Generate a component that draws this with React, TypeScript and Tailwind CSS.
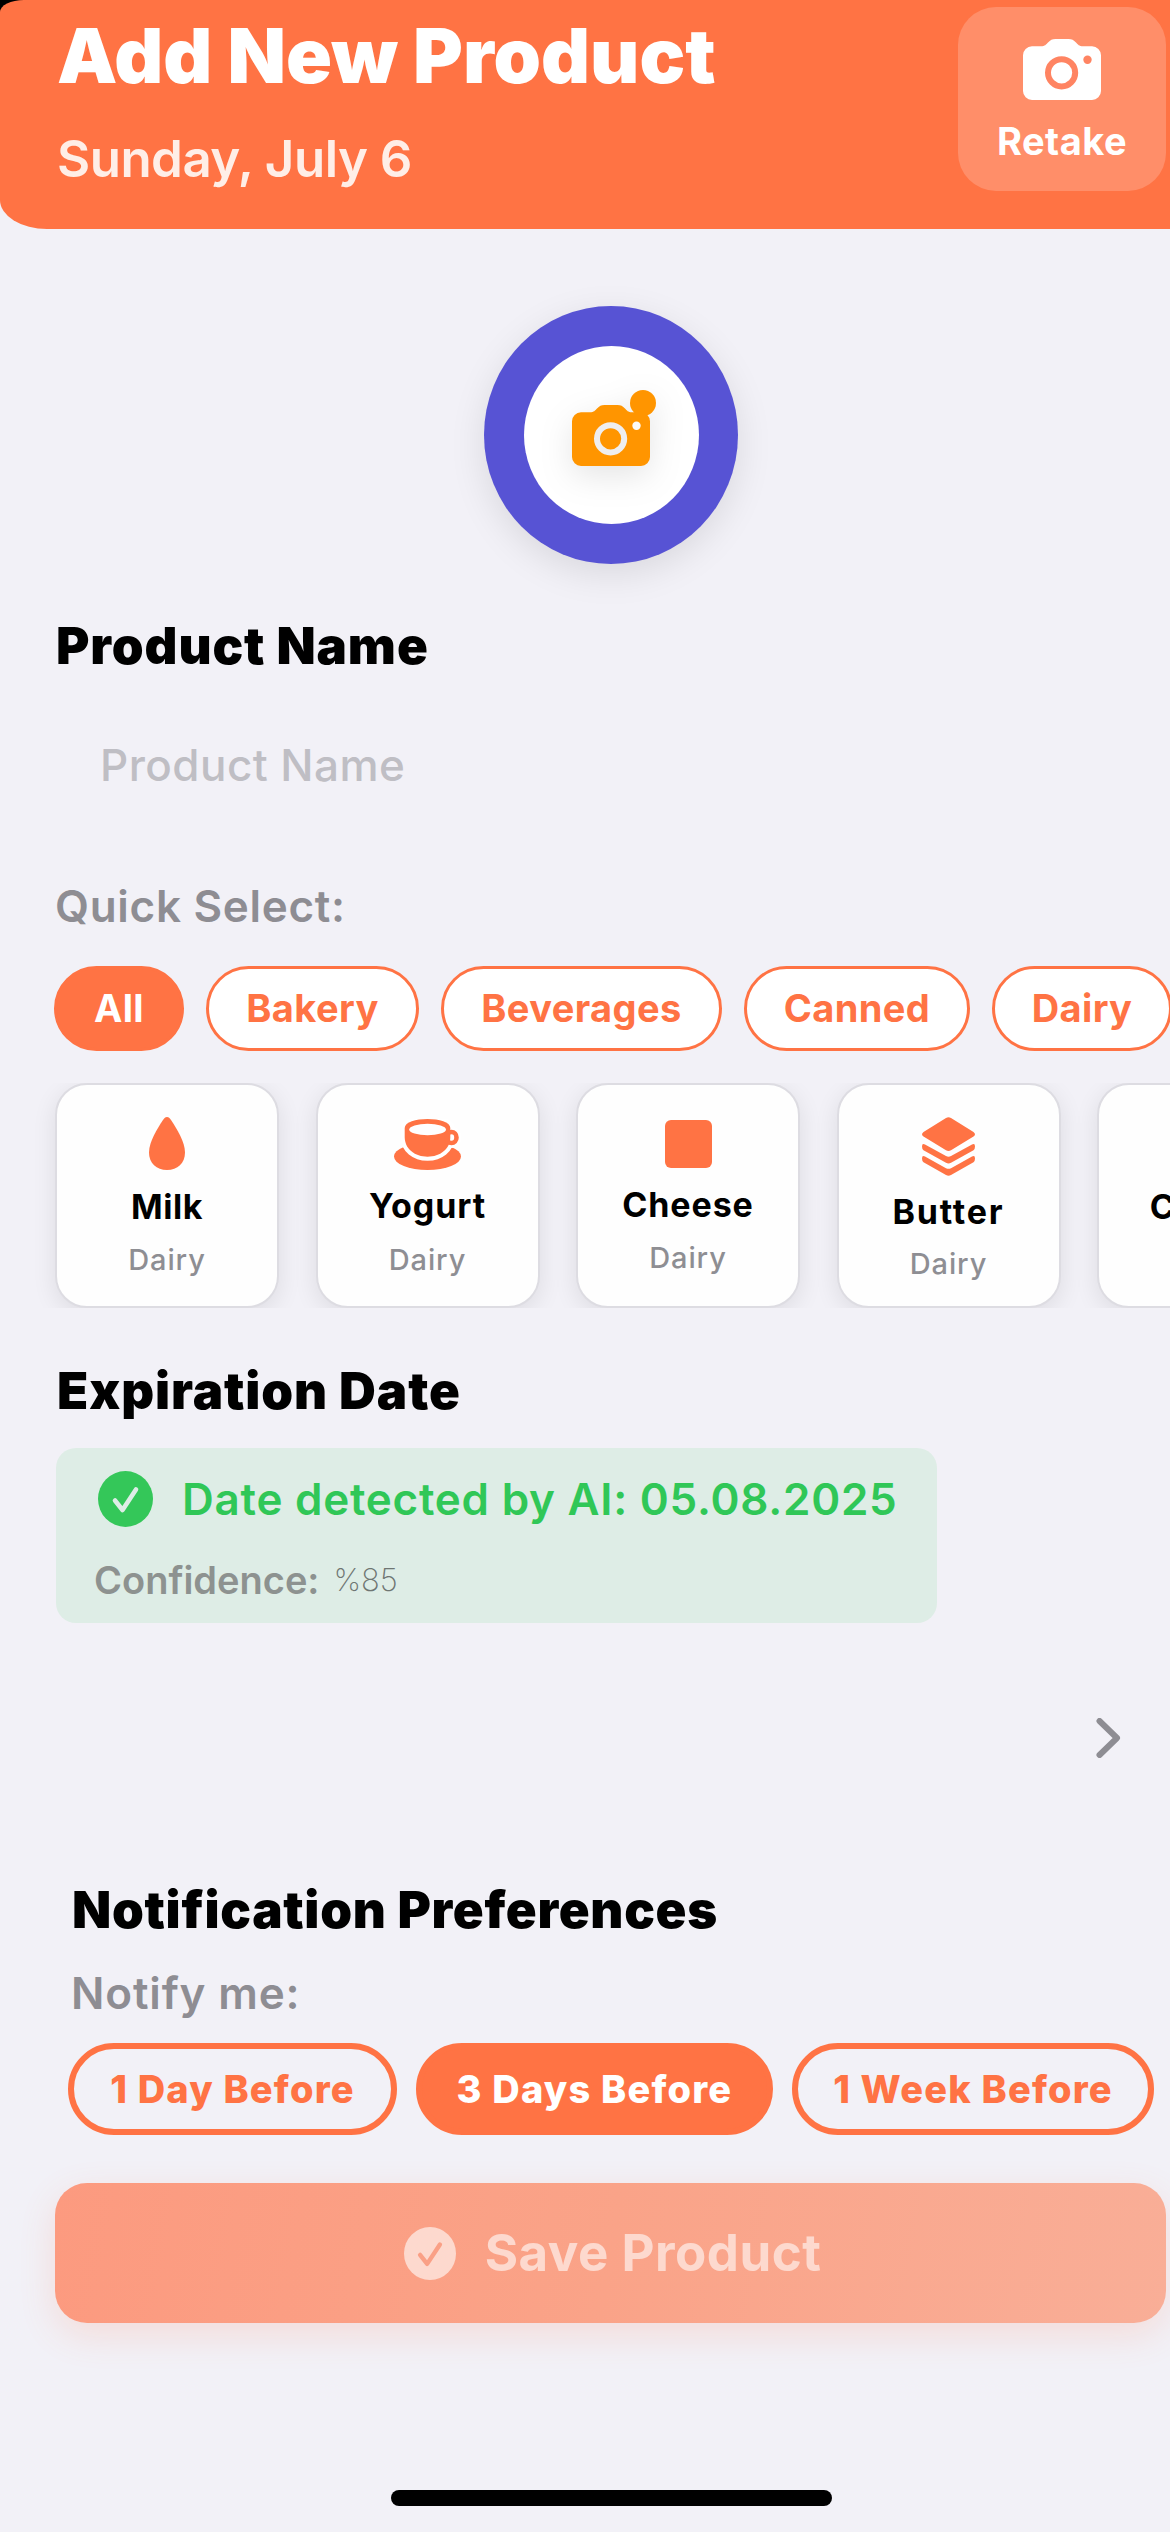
import React, { useState } from "react";

type IconProps = { className?: string };

const CameraIcon = ({
  className,
  lens,
  flash,
}: IconProps & { lens: string; flash: string }) => (
  <svg viewBox="0 0 78 61" className={className} fill="none">
    <path
      d="M9 7.3h9c4 0 5-1.8 7-3.8C27.500 1 29 0 32.500 0h13c3.500 0 5 1 7.500 3.500 2 2 3 3.800 7 3.800h9a9 9 0 0 1 9 9V52a9 9 0 0 1-9 9H9a9 9 0 0 1-9-9V16.300a9 9 0 0 1 9-9Z"
      fill="currentColor"
    />
    <circle cx="38.600" cy="33.800" r="13.600" stroke={lens} strokeWidth="6" />
    <circle cx="64.500" cy="20.700" r="4.200" fill={flash} />
  </svg>
);

const CheckCircle = ({ className, mark }: IconProps & { mark: string }) => (
  <svg viewBox="0 0 55 56" className={className} fill="none">
    <ellipse cx="27.500" cy="28" rx="27.500" ry="28" fill="currentColor" />
    <path
      d="M17 29.500l7.500 9.500L38 18.500"
      stroke={mark}
      strokeWidth="4.600"
      strokeLinecap="round"
      strokeLinejoin="round"
    />
  </svg>
);

const DropIcon = () => (
  <svg viewBox="0 0 36 53" className="h-[53px] w-9">
    <path
      d="M18 0c2 0 3 1.500 4 3 6 9 14 22 14 32.500C36 46 28.500 53 18 53S0 46 0 35.500C0 25 8 12 14 3c1-1.500 2-3 4-3Z"
      fill="currentColor"
    />
  </svg>
);

const CupIcon = () => (
  <svg viewBox="0 0 67 51" className="h-[51px] w-[67px]" fill="none">
    <ellipse cx="33.500" cy="37.500" rx="33.500" ry="13.500" fill="currentColor" />
    <ellipse cx="57.500" cy="18.500" rx="5" ry="5.500" stroke="#fff" strokeWidth="10" />
    <path
      d="M10.700 9C10.700 3 22 0 33.500 0s22.800 3 22.800 9v9c0 12-10.300 19.700-22.800 19.700S10.700 30 10.700 18Z"
      fill="currentColor"
      stroke="#fff"
      strokeWidth="8"
      paintOrder="stroke"
    />
    <ellipse cx="57.500" cy="18.500" rx="5" ry="5.500" stroke="currentColor" strokeWidth="4.600" />
    <ellipse cx="33.600" cy="10.500" rx="18.400" ry="5.800" fill="#fff" />
  </svg>
);

const SquareIcon = () => (
  <svg viewBox="0 0 47 48" className="h-12 w-[47px]">
    <rect width="47" height="48" rx="6" fill="currentColor" />
  </svg>
);

const LayersIcon = () => (
  <svg viewBox="0 0 53 59" className="h-[59px] w-[53px]" fill="currentColor">
    <path d="M24 .9q2.500-1.500 5 0L51.500 15q3 2.300 0 4.600L29 33.200q-2.500 1.600-5 0L1.500 19.600q-3-2.300 0-4.600Z" />
    <path d="M0 29.500q0-3.600 3-2L24 39.100q2.500 1.300 5 0L50 27.500q3-1.600 3 2 0 2.700-1.500 3.700L29 45.800q-2.500 1.500-5 0L1.500 33.200Q0 32.200 0 29.500Z" />
    <path d="M0 41.500q0-3.600 3-2l21 11.700q2.500 1.300 5 0l21-11.700q3-1.600 3 2 0 2.700-1.500 3.700L29 58q-2.500 1.500-5 0L1.500 45.200Q0 44.200 0 41.500Z" />
  </svg>
);

const categories = [
  { name: "All", width: "w-[130px]" },
  { name: "Bakery", width: "w-[213px]" },
  { name: "Beverages", width: "w-[281px]" },
  { name: "Canned", width: "w-[226px]" },
  { name: "Dairy", width: "w-[180px]" },
];

const products = [
  { name: "Milk", icon: <DropIcon />, iconBox: "h-[99px] pt-8", gap: "mt-[10px]", tracking: "tracking-[0.6px]" },
  { name: "Yogurt", icon: <CupIcon />, iconBox: "h-[98px] pt-[34px]", gap: "mt-[11px]", tracking: "tracking-[0.9px]" },
  { name: "Cheese", icon: <SquareIcon />, iconBox: "h-[97px] pt-[35px]", gap: "mt-[10px]", tracking: "tracking-[0.9px]" },
  { name: "Butter", icon: <LayersIcon />, iconBox: "h-[104px] pt-8", gap: "mt-[9px]", tracking: "tracking-[1.8px]" },
  { name: "Cream", icon: <DropIcon />, iconBox: "h-[99px] pt-8", gap: "mt-[10px]", tracking: "tracking-[1.8px]" },
];

const reminders = [
  { label: "1 Day Before", width: "w-[329px]" },
  { label: "3 Days Before", width: "w-[357px]" },
  { label: "1 Week Before", width: "w-[362px]" },
];

export default function App() {
  const [category, setCategory] = useState("All");
  const [reminder, setReminder] = useState("3 Days Before");
  const [name, setName] = useState("");

  return (
    <div className="h-[2532px] w-[1170px] overflow-hidden bg-[#f2f1f7] font-['Inter',sans-serif] text-black">
      {/* Header */}
      <div className="bg-[linear-gradient(#000_50%,#f2f1f7_50%)]">
        <header className="flex h-[229px] items-start justify-between rounded-tl-[24px_12px] rounded-bl-[47px_29px] bg-[#ff7344] pr-1 pl-[57px]">
          <div className="pt-[10px]">
            <h1 className="text-[76px] leading-[91px] font-black text-white">
              Add New Product
            </h1>
            <p className="mt-[27px] text-[51px] leading-[61px] font-semibold tracking-[-0.500px] text-[#ffeee7]">
              Sunday, July 6
            </p>
          </div>
          <button className="mt-[7px] flex h-[184px] w-[208px] flex-col items-center rounded-[38px] bg-[#ff8e69] pt-8 text-white">
            <CameraIcon className="h-[61px] w-[78px]" lens="#ff8462" flash="#ff8462" />
            <span className="mt-[18px] text-[38px] leading-[46px] font-bold tracking-[0.5px]">
              Retake
            </span>
          </button>
        </header>
      </div>

      <main className="flex flex-col">
        {/* Photo status */}
        <div className="mt-[77px] ml-[484px] flex h-[258px] w-[254px] items-center justify-center rounded-[50%] bg-[#5753d4] shadow-[0_10px_36px_rgba(0,0,0,0.1)]">
          <div className="flex h-[178px] w-[175px] items-center justify-center rounded-[50%] bg-white">
            <div className="relative text-[#ff9500] drop-shadow-[0_10px_16px_rgba(0,0,0,0.1)]">
              <CameraIcon className="h-[61px] w-[78px]" lens="#efeeef" flash="#fbfbfb" />
              <span className="absolute -top-[15px] -right-[6px] size-[26px] rounded-full bg-[#ff9500]" />
            </div>
          </div>
        </div>

        {/* Product name */}
        <h2 className="mt-[52px] ml-[56px] text-[51px] leading-[60px] font-black tracking-[0.900px]">
          Product Name
        </h2>
        <input
          value={name}
          onChange={(e) => setName(e.target.value)}
          placeholder="Product Name"
          className="mt-[59px] ml-[100px] h-[60px] w-[900px] text-[44px] leading-[60px] font-medium tracking-[0.450px] placeholder:text-[#bfbec4] focus:outline-none"
        />

        {/* Quick select */}
        <p className="mt-[81px] ml-[55px] text-[44px] leading-[60px] font-semibold tracking-[0.700px] text-[#8e8d93]">
          Quick Select:
        </p>
        <div className="mt-[30px] flex h-[85px] gap-[22px] overflow-hidden pl-[54px]">
          {categories.map((c) => (
            <button
              key={c.name}
              onClick={() => setCategory(c.name)}
              className={`${c.width} ${
                category === c.name ? "bg-[#ff7344] text-white" : "bg-white text-[#ff7344]"
              } flex shrink-0 items-center justify-center rounded-full border-[3px] border-[#ff7344] pb-[1px] text-[38px] font-bold tracking-[0.400px]`}
            >
              {c.name}
            </button>
          ))}
        </div>
        <div className="mt-8 flex h-[225px] gap-[36.500px] overflow-hidden pl-[55px]">
          {products.map((p) => (
            <div
              key={p.name}
              className="flex w-[224px] shrink-0 flex-col items-center rounded-[32px] border-2 border-[#dddce2] bg-[#fefefe] shadow-[0_6px_24px_rgba(0,0,0,0.09)]"
            >
              <div className={`${p.iconBox} text-[#ff7344]`}>{p.icon}</div>
              <span className={`${p.tracking} text-[34px] leading-[46px] font-bold`}>{p.name}</span>
              <span className={`${p.gap} text-[29px] leading-10 font-medium tracking-[0.900px] text-[#8e8e93]`}>
                Dairy
              </span>
            </div>
          ))}
        </div>

        {/* Expiration date */}
        <h2 className="mt-[53px] ml-[57px] text-[51px] leading-[60px] font-black tracking-[0.900px]">
          Expiration Date
        </h2>
        <section className="mt-[27px] ml-[56px] h-[175px] w-[881px] rounded-[20px] bg-[#deede6] pt-[23px]">
          <div className="flex h-14 items-center pl-[42px]">
            <CheckCircle className="h-14 w-[55px] text-[#34c759]" mark="#deede6" />
            <span className="ml-[29px] text-[44px] leading-[56px] font-semibold tracking-[0.750px] whitespace-nowrap text-[#30c757]">
              Date detected by AI: 05.08.2025
            </span>
          </div>
          <div className="mt-[30px] flex items-center pl-[38px]">
            <span className="text-[38px] leading-[46px] font-semibold text-[#8d9290]">
              Confidence:
            </span>
            <span className="ml-[14px] text-[31px] leading-[46px] font-extralight text-[#6f7673]">
              %85
            </span>
          </div>
        </section>
        <button className="mt-[2px] flex h-[226px] items-center justify-end pr-[49px] text-[#8e8d93]">
          <svg viewBox="0 0 25 40" className="h-10 w-[25px]" fill="none">
            <path
              d="M3.500 3 21 20 3.500 37"
              stroke="currentColor"
              strokeWidth="6"
              strokeLinecap="round"
              strokeLinejoin="round"
            />
          </svg>
        </button>

        {/* Notifications */}
        <h2 className="mt-[29px] ml-[72px] text-[51px] leading-[60px] font-black tracking-[0.700px]">
          Notification Preferences
        </h2>
        <p className="mt-[23px] ml-[71px] text-[44px] leading-[60px] font-semibold tracking-[0.850px] text-[#8e8d93]">
          Notify me:
        </p>
        <div className="mt-5 flex h-[92px] gap-[19px] pl-[68px]">
          {reminders.map((r) => (
            <button
              key={r.label}
              onClick={() => setReminder(r.label)}
              className={`${r.width} ${
                reminder === r.label ? "bg-[#ff7344] text-white" : "text-[#ff7344]"
              } flex shrink-0 items-center justify-center rounded-full border-[6px] border-[#ff7344] text-[38px] font-extrabold tracking-[1.200px] whitespace-nowrap`}
            >
              {r.label}
            </button>
          ))}
        </div>

        {/* Save */}
        <button className="mt-[48px] ml-[55px] flex h-[140px] w-[1111px] items-center justify-center rounded-[32px] bg-[linear-gradient(100deg,#fc9a7f,#faa388_50%,#f9ae97)] pl-1 text-[#fdd9ce] shadow-[0_12px_36px_rgba(255,115,68,0.16)]">
          <CheckCircle className="h-[53px] w-[52px]" mark="#faa086" />
          <span className="ml-[29px] text-[51px] leading-[60px] font-bold tracking-[0.500px]">
            Save Product
          </span>
        </button>

        <div className="mt-[167px] ml-[391px] h-4 w-[441px] rounded-full bg-black" />
      </main>
    </div>
  );
}
